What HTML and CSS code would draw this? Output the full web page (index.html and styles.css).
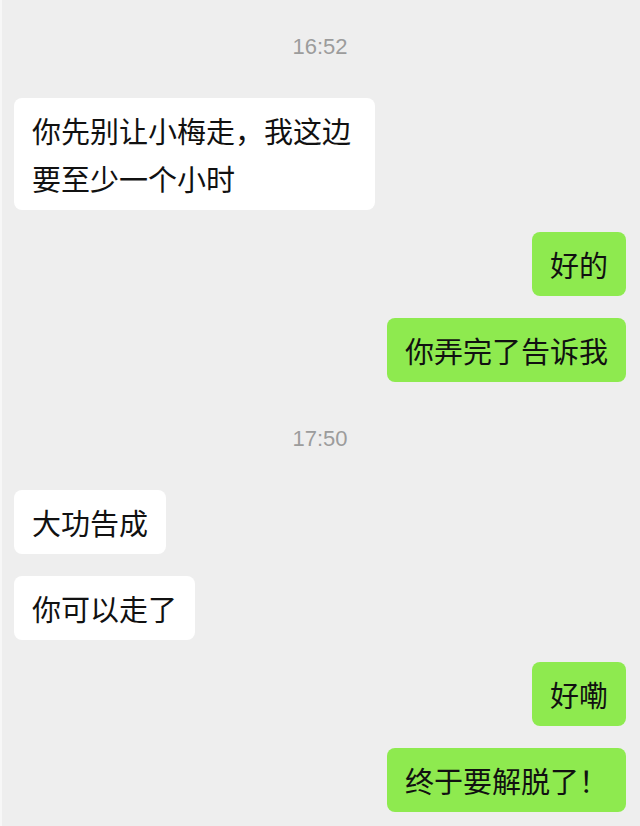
FILE: index.html
```html
<!DOCTYPE html>
<html lang="zh-CN">
  <head>
    <meta charset="UTF-8" />
    <meta name="viewport" content="width=device-width, initial-scale=1.0" />
    <title>聊天记录</title>
    <link rel="stylesheet" href="styles.css">
  </head>
  <body>
    <div class="chat">
      <div class="time">16:52</div>
      <div class="row left">
        <div class="bubble">你先别让小梅走，我这边要至少一个小时</div>
      </div>
      <div class="row right">
        <div class="bubble">好的</div>
      </div>
      <div class="row right">
        <div class="bubble">你弄完了告诉我</div>
      </div>

      <div class="time">17:50</div>
      <div class="row left">
        <div class="bubble">大功告成</div>
      </div>
      <div class="row left">
        <div class="bubble">你可以走了</div>
      </div>
      <div class="row right">
        <div class="bubble">好嘞</div>
      </div>
      <div class="row right">
        <div class="bubble">终于要解脱了！</div>
      </div>
    </div>
  </body>
</html>
```

FILE: styles.css
```css
html,
body {
  margin: 0;
  padding: 0;
  background-color: #eeeeee;
}
body {
  font-family: "Noto Sans CJK SC", "Noto Sans", sans-serif;
  color: #111;
  border-left: 2px solid #f7f7f7;
}
.chat {
  padding: 12px 14px 16px 12px;
}
.time {
  text-align: center;
  font-family: "Liberation Sans", "Noto Sans CJK SC", sans-serif;
  font-size: 22px;
  line-height: 30px;
  color: #9c9c9c;
  padding: 20px 0 15px;
  margin-bottom: 21px;
}
.row {
  display: flex;
  margin-bottom: 22px;
}
.row.left {
  justify-content: flex-start;
}
.row.right {
  justify-content: flex-end;
}
.bubble {
  max-width: 361px;
  box-sizing: border-box;
  padding: 8px 18px;
  font-size: 29px;
  line-height: 48px;
  border-radius: 8px;
  background-color: #fff;
}
.right .bubble {
  background-color: #8eea4f;
}
```
